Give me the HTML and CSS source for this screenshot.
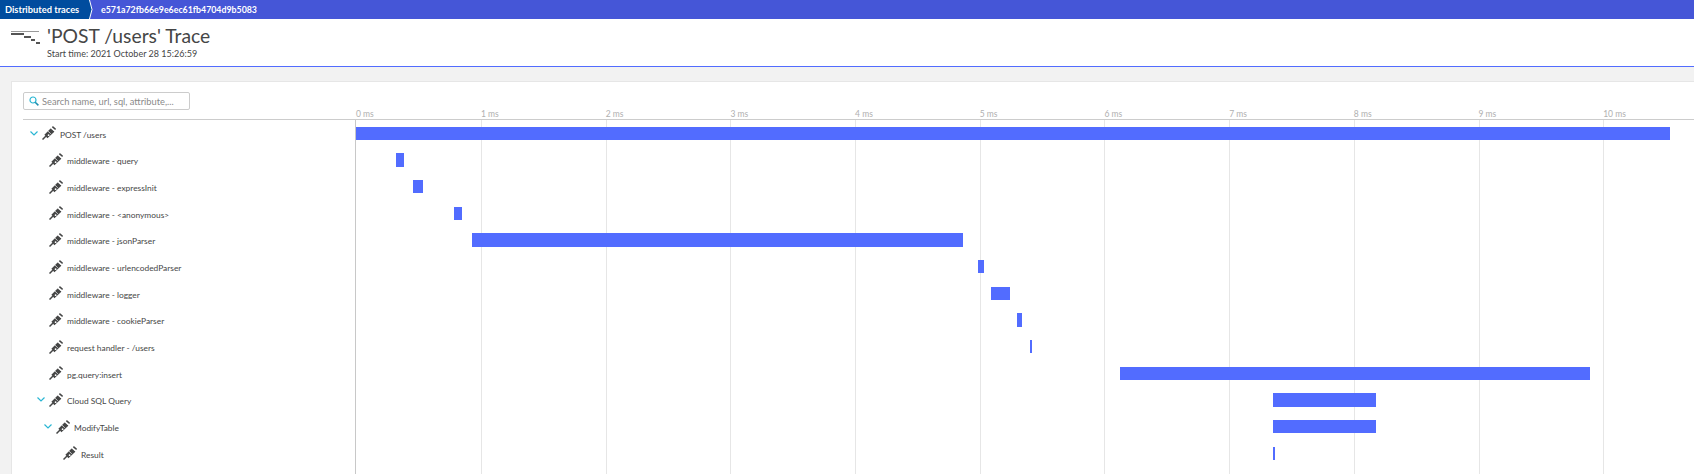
FILE: index.html
```html
<!DOCTYPE html>
<html>
<head>
  <meta charset="utf-8">
  <meta name="viewport" content="width=device-width">
  <title>'POST /users' Trace</title>
  <link rel="stylesheet" href="styles.css">
</head>
<body>
  <svg class="defs" width="0" height="0">
    <symbol id="probe" viewBox="0 0 14 14">
      <path d="M0.5 13.5 L4 10" stroke="#454646" stroke-width="1.5" fill="none"/>
      <path d="M2.4 8.8 L8.8 2.2 L12.6 5.4 L5.4 12.2 Z" fill="#454646"/>
      <path d="M8 1.4 L13 5.8 M5.4 4.6 L8.8 7.8" stroke="#fff" stroke-width="0.7" fill="none"/>
      <path d="M10.4 0.6 L13.6 3.4" stroke="#454646" stroke-width="1.5" fill="none"/>
      <circle cx="6.6" cy="9.2" r="0.9" fill="#fff"/>
    </symbol>
    <symbol id="chevron" viewBox="0 0 8 5">
      <path d="M0.5 0.5 L4 4 L7.5 0.5" stroke="#2ab6d3" stroke-width="1.2" fill="none"/>
    </symbol>
  </svg>

  <nav class="crumbs">
    <span class="crumb-root">Distributed traces</span>
    <svg class="crumb-arrow" width="6" height="19" viewBox="0 0 6 19">
      <path d="M0 0 L2.5 0 L5 9.5 L2.5 19 L0 19 Z" fill="#004c9e"/>
      <path d="M2.5 0 L5 9.5 L2.5 19" stroke="#fff" stroke-width="1" fill="none"/>
    </svg>
    <span class="crumb-current">e571a72fb66e9e6ec61fb4704d9b5083</span>
  </nav>

  <header class="page-head">
    <svg class="trace-icon" width="29" height="15" viewBox="0 0 29 15">
      <rect x="0" y="0" width="28" height="1" fill="#9a9a9a"/>
      <rect x="0" y="2" width="13" height="2" fill="#555"/>
      <rect x="13" y="5" width="7" height="2" fill="#555"/>
      <rect x="20" y="8" width="4" height="2" fill="#555"/>
      <rect x="25" y="11" width="4" height="2" fill="#555"/>
    </svg>
    <div>
      <h1 class="title">'POST /users' Trace</h1>
      <p class="subtitle">Start time: 2021 October 28 15:26:59</p>
    </div>
  </header>

  <main class="content">
    <section class="panel">
      <div class="panel-head">
        <div class="search-col">
          <div class="search">
            <svg width="10" height="10" viewBox="0 0 10 10">
              <circle cx="4" cy="4" r="3" stroke="#2ab6d3" stroke-width="1.2" fill="none"/>
              <path d="M6.2 6.2 L9.4 9.4" stroke="#1f8fb0" stroke-width="1.5"/>
            </svg>
            <span>Search name, url, sql, attribute,...</span>
          </div>
        </div>
        <div class="ticks">
          <span class="tick first">0 ms</span>
          <span class="tick">1 ms</span>
          <span class="tick">2 ms</span>
          <span class="tick">3 ms</span>
          <span class="tick">4 ms</span>
          <span class="tick">5 ms</span>
          <span class="tick">6 ms</span>
          <span class="tick">7 ms</span>
          <span class="tick">8 ms</span>
          <span class="tick">9 ms</span>
          <span class="tick">10 ms</span>
        </div>
      </div>

      <div class="panel-body">
        <div class="grid">
          <i class="grid-line first"></i>
          <i class="grid-line"></i>
          <i class="grid-line"></i>
          <i class="grid-line"></i>
          <i class="grid-line"></i>
          <i class="grid-line"></i>
          <i class="grid-line"></i>
          <i class="grid-line"></i>
          <i class="grid-line"></i>
          <i class="grid-line"></i>
          <i class="grid-line"></i>
        </div>

        <div class="row">
          <div class="span-name depth-0">
            <svg class="toggle"><use href="#chevron"/></svg>
            <svg class="probe"><use href="#probe"/></svg>
            <span>POST /users</span>
          </div>
          <div class="track"><div class="bar" style="margin-left:1px;width:1314px"></div></div>
        </div>
        <div class="row">
          <div class="span-name depth-1">
            <span class="toggle"></span>
            <svg class="probe"><use href="#probe"/></svg>
            <span>middleware - query</span>
          </div>
          <div class="track"><div class="bar" style="margin-left:41px;width:8px"></div></div>
        </div>
        <div class="row">
          <div class="span-name depth-1">
            <span class="toggle"></span>
            <svg class="probe"><use href="#probe"/></svg>
            <span>middleware - expressInit</span>
          </div>
          <div class="track"><div class="bar" style="margin-left:58px;width:10px"></div></div>
        </div>
        <div class="row">
          <div class="span-name depth-1">
            <span class="toggle"></span>
            <svg class="probe"><use href="#probe"/></svg>
            <span>middleware - &lt;anonymous&gt;</span>
          </div>
          <div class="track"><div class="bar" style="margin-left:99px;width:8px"></div></div>
        </div>
        <div class="row">
          <div class="span-name depth-1">
            <span class="toggle"></span>
            <svg class="probe"><use href="#probe"/></svg>
            <span>middleware - jsonParser</span>
          </div>
          <div class="track"><div class="bar" style="margin-left:117px;width:491px"></div></div>
        </div>
        <div class="row">
          <div class="span-name depth-1">
            <span class="toggle"></span>
            <svg class="probe"><use href="#probe"/></svg>
            <span>middleware - urlencodedParser</span>
          </div>
          <div class="track"><div class="bar" style="margin-left:623px;width:6px"></div></div>
        </div>
        <div class="row">
          <div class="span-name depth-1">
            <span class="toggle"></span>
            <svg class="probe"><use href="#probe"/></svg>
            <span>middleware - logger</span>
          </div>
          <div class="track"><div class="bar" style="margin-left:636px;width:19px"></div></div>
        </div>
        <div class="row">
          <div class="span-name depth-1">
            <span class="toggle"></span>
            <svg class="probe"><use href="#probe"/></svg>
            <span>middleware - cookieParser</span>
          </div>
          <div class="track"><div class="bar" style="margin-left:662px;width:5px"></div></div>
        </div>
        <div class="row">
          <div class="span-name depth-1">
            <span class="toggle"></span>
            <svg class="probe"><use href="#probe"/></svg>
            <span>request handler - /users</span>
          </div>
          <div class="track"><div class="bar" style="margin-left:675px;width:2px"></div></div>
        </div>
        <div class="row">
          <div class="span-name depth-1">
            <span class="toggle"></span>
            <svg class="probe"><use href="#probe"/></svg>
            <span>pg.query:insert</span>
          </div>
          <div class="track"><div class="bar" style="margin-left:765px;width:470px"></div></div>
        </div>
        <div class="row">
          <div class="span-name depth-1">
            <svg class="toggle"><use href="#chevron"/></svg>
            <svg class="probe"><use href="#probe"/></svg>
            <span>Cloud SQL Query</span>
          </div>
          <div class="track"><div class="bar" style="margin-left:918px;width:103px"></div></div>
        </div>
        <div class="row">
          <div class="span-name depth-2">
            <svg class="toggle"><use href="#chevron"/></svg>
            <svg class="probe"><use href="#probe"/></svg>
            <span>ModifyTable</span>
          </div>
          <div class="track"><div class="bar" style="margin-left:918px;width:103px"></div></div>
        </div>
        <div class="row">
          <div class="span-name depth-3">
            <span class="toggle"></span>
            <svg class="probe"><use href="#probe"/></svg>
            <span>Result</span>
          </div>
          <div class="track"><div class="bar" style="margin-left:918px;width:2px"></div></div>
        </div>
      </div>
    </section>
  </main>
</body>
</html>
```

FILE: styles.css
```css
:root {
  --nav-color: #4556d7;
  --nav-dark: #004c9e;
  --bar-color: #526cff;
  --text-color: #454646;
  --line-color: #cccccc;
  --grid-color: #e6e6e6;
  --tick-first: 126px;
  --tick-width: 124.7px;
}

html, body {
  height: 474px;
  overflow: hidden;
}

body {
  margin: 0;
  font-family: Lato, "Open Sans", sans-serif;
  color: var(--text-color);
  background: #fff;
}

.defs {
  position: absolute;
}

/* breadcrumb */
.crumbs {
  display: flex;
  align-items: center;
  height: 19px;
  margin-bottom: 1px;
  background: var(--nav-color);
  color: #fff;
  font-size: 9.3px;
  font-weight: 700;
  white-space: nowrap;
}

.crumb-root {
  display: flex;
  align-items: center;
  width: 87px;
  height: 100%;
  padding-left: 5px;
  box-sizing: border-box;
  background: var(--nav-dark);
}

.crumb-arrow {
  flex: none;
}

.crumb-current {
  margin-left: 8px;
  font-size: 8.8px;
}

/* page heading */
.page-head {
  display: flex;
  align-items: flex-start;
  height: 46px;
  padding-left: 11px;
  border-bottom: 1px solid var(--bar-color);
  box-sizing: content-box;
}

.trace-icon {
  flex: none;
  margin: 11px 7px 0 0;
}

.title {
  margin: 4px 0 0;
  font-size: 19.3px;
  font-weight: 400;
  line-height: 24px;
}

.subtitle {
  margin: 0;
  font-size: 9px;
  line-height: 12px;
}

/* main panel */
.content {
  height: 407px;
  padding: 14px 0 0 11px;
  box-sizing: border-box;
  background: #f2f2f2;
}

.panel {
  height: 100%;
  padding-left: 11px;
  background: #fff;
  border-top: 1px solid var(--grid-color);
  border-left: 1px solid var(--grid-color);
}

.panel-head {
  display: flex;
  height: 37px;
  border-bottom: 1px solid var(--line-color);
  box-sizing: content-box;
}

.search-col {
  flex: none;
  width: 332px;
  padding-top: 10px;
  box-sizing: border-box;
}

.search {
  display: flex;
  align-items: center;
  gap: 3px;
  width: 167px;
  height: 18px;
  padding-left: 5px;
  border: 1px solid var(--line-color);
  border-radius: 2px;
  box-sizing: border-box;
  font-size: 9.3px;
  color: #8a8a8a;
  white-space: nowrap;
}

.ticks {
  display: flex;
  align-items: flex-end;
  font-size: 8.5px;
  line-height: 10px;
  color: #b0b0b0;
}

.tick {
  flex: none;
  width: var(--tick-width);
  white-space: nowrap;
}

.tick.first {
  width: var(--tick-first);
  padding-left: 1px;
  box-sizing: border-box;
}

.panel-body {
  position: relative;
  height: 354px;
  overflow: hidden;
}

/* vertical lines behind the bars */
.grid {
  position: absolute;
  top: 0;
  bottom: 0;
  left: 332px;
  display: flex;
}

.grid-line {
  flex: none;
  width: var(--tick-width);
  border-left: 1px solid var(--grid-color);
  box-sizing: border-box;
}

.grid-line.first {
  width: var(--tick-first);
  border-left-color: #c8c8c8;
}

.row {
  position: relative;
  display: flex;
  align-items: center;
  height: 26.67px;
}

.span-name {
  flex: none;
  display: flex;
  align-items: center;
  width: 332px;
  box-sizing: border-box;
  font-size: 8.4px;
  white-space: nowrap;
}

.span-name span:last-child {
  padding-top: 3px;
}

.depth-0 { padding-left: 7px; }
.depth-1 { padding-left: 14px; }
.depth-2 { padding-left: 21px; }
.depth-3 { padding-left: 28px; }

.toggle {
  flex: none;
  width: 8px;
  height: 5px;
  margin-right: 4px;
}

.probe {
  flex: none;
  width: 14px;
  height: 14px;
  margin-right: 4px;
}

.track {
  flex: 1;
}

.bar {
  height: 13.33px;
  background: var(--bar-color);
}
```
